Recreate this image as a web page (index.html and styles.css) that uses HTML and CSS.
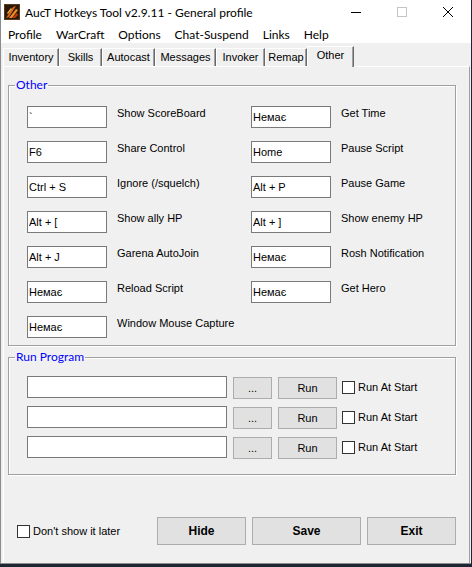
FILE: index.html
```html
<!DOCTYPE html>
<html lang="en">
<head>
  <meta charset="UTF-8">
  <title>AucT Hotkeys Tool v2.9.11 - General profile</title>
  <link rel="stylesheet" href="styles.css">
</head>
<body>
  <div class="window">
    <div class="titlebar">
      <svg class="app-icon" width="16" height="16" viewBox="0 0 16 16">
        <rect width="16" height="16" fill="#2a1809"/>
        <rect x="0.5" y="0.5" width="15" height="15" fill="none" stroke="#5a3a1c"/>
        <path d="M2 14 L9 3 L12 2 L5 13 Z" fill="#d9661a"/>
        <path d="M5 14 L12 5 L14 6 L8 14 Z" fill="#f08a24"/>
        <path d="M8 14 L13 9 L14 11 L11 14 Z" fill="#b83a12"/>
        <path d="M3 9 L7 4 L8 5 L4 10 Z" fill="#f6b24a"/>
      </svg>
      <span class="title">AucT Hotkeys Tool v2.9.11 - General profile</span>
      <div class="caption">
        <span class="cap-btn">
          <svg width="10" height="10" viewBox="0 0 10 10"><path d="M0 5.5 H10" stroke="#000" stroke-width="1"/></svg>
        </span>
        <span class="cap-btn">
          <svg width="10" height="10" viewBox="0 0 10 10"><rect x="0.5" y="0.5" width="9" height="9" fill="none" stroke="#c4c4c4"/></svg>
        </span>
        <span class="cap-btn">
          <svg width="10" height="10" viewBox="0 0 10 10"><path d="M0 0 L10 10 M10 0 L0 10" stroke="#000" stroke-width="1"/></svg>
        </span>
      </div>
    </div>

    <ul class="menubar">
      <li>Profile</li>
      <li>WarCraft</li>
      <li>Options</li>
      <li>Chat-Suspend</li>
      <li>Links</li>
      <li>Help</li>
    </ul>

    <div class="tabs">
      <div class="tab tab-inventory">Inventory</div>
      <div class="tab tab-skills">Skills</div>
      <div class="tab tab-autocast">Autocast</div>
      <div class="tab tab-messages">Messages</div>
      <div class="tab tab-invoker">Invoker</div>
      <div class="tab tab-remap">Remap</div>
      <div class="tab tab-other active">Other</div>
    </div>

    <div class="tabpage">
      <fieldset class="group group-other">
        <legend>Other</legend>
        <div class="hotkeys">
          <div class="hotkey"><div class="textbox">`</div><span class="hk-label">Show ScoreBoard</span></div>
          <div class="hotkey"><div class="textbox">F6</div><span class="hk-label">Share Control</span></div>
          <div class="hotkey"><div class="textbox">Ctrl + S</div><span class="hk-label">Ignore (/squelch)</span></div>
          <div class="hotkey"><div class="textbox">Alt + [</div><span class="hk-label">Show ally HP</span></div>
          <div class="hotkey"><div class="textbox">Alt + J</div><span class="hk-label">Garena AutoJoin</span></div>
          <div class="hotkey"><div class="textbox">Немає</div><span class="hk-label">Reload Script</span></div>
          <div class="hotkey"><div class="textbox">Немає</div><span class="hk-label">Window Mouse Capture</span></div>
          <div class="hotkey"><div class="textbox">Немає</div><span class="hk-label">Get Time</span></div>
          <div class="hotkey"><div class="textbox">Home</div><span class="hk-label">Pause Script</span></div>
          <div class="hotkey"><div class="textbox">Alt + P</div><span class="hk-label">Pause Game</span></div>
          <div class="hotkey"><div class="textbox">Alt + ]</div><span class="hk-label">Show enemy HP</span></div>
          <div class="hotkey"><div class="textbox">Немає</div><span class="hk-label">Rosh Notification</span></div>
          <div class="hotkey"><div class="textbox">Немає</div><span class="hk-label">Get Hero</span></div>
        </div>
      </fieldset>

      <fieldset class="group group-run">
        <legend>Run Program</legend>
        <div class="run-row">
          <div class="textbox wide"></div>
          <span class="btn btn-browse">...</span>
          <span class="btn btn-run">Run</span>
          <span class="check"></span>
          <span class="check-label">Run At Start</span>
        </div>
        <div class="run-row">
          <div class="textbox wide"></div>
          <span class="btn btn-browse">...</span>
          <span class="btn btn-run">Run</span>
          <span class="check"></span>
          <span class="check-label">Run At Start</span>
        </div>
        <div class="run-row">
          <div class="textbox wide"></div>
          <span class="btn btn-browse">...</span>
          <span class="btn btn-run">Run</span>
          <span class="check"></span>
          <span class="check-label">Run At Start</span>
        </div>
      </fieldset>

      <div class="footer">
        <span class="check"></span>
        <span class="check-label">Don't show it later</span>
        <span class="btn btn-big btn-hide">Hide</span>
        <span class="btn btn-big btn-save">Save</span>
        <span class="btn btn-big btn-exit">Exit</span>
      </div>
    </div>
  </div>
</body>
</html>
```

FILE: styles.css
```css
*{
  margin: 0;
  padding: 0;
  box-sizing: border-box;
}
ul,li{
  list-style: none;
}
body{
  background: #1d2734;
  width: 472px;
  height: 567px;
  overflow: hidden;
}
.window{
  display: flex;
  flex-direction: column;
  width: 471px;
  height: 564px;
  background: #f0f0f0;
  border-left: 1px solid #8c8c8c;
  border-bottom: 1px solid #8c8c8c;
}

/* title bar */
.titlebar{
  display: flex;
  align-items: center;
  height: 24px;
  background: #fff;
  font-family: Lato, "Noto Sans", sans-serif;
  font-size: 12px;
  color: #000;
}
.app-icon{
  margin-left: 3px;
  flex-shrink: 0;
}
.title{
  margin-left: 5px;
  padding-top: 1px;
}
.caption{
  display: flex;
  margin-left: auto;
  height: 100%;
}
.cap-btn{
  display: flex;
  align-items: center;
  justify-content: center;
  width: 46px;
  height: 100%;
}

/* menu */
.menubar{
  display: flex;
  height: 19px;
  padding: 2px 0 0 0;
  background: #fff;
  font-family: Lato, "Noto Sans", sans-serif;
  font-size: 12px;
  line-height: 17px;
}
.menubar li{
  padding: 0 7px;
}
.menubar li:first-child{
  padding-left: 7px;
}

/* tabs */
.tabs{
  display: flex;
  align-items: flex-end;
  height: 23px;
  padding-left: 2px;
  font-family: "Liberation Sans", Arial, sans-serif;
  font-size: 11px;
}
.tab{
  height: 18px;
  line-height: 17px;
  text-align: center;
  border-top: 1px solid #fff;
  border-left: 1px solid #fff;
  border-right: 1px solid #696969;
  box-shadow: inset -1px 0 0 #a0a0a0;
}
.tab-inventory{ width: 56px; }
.tab-skills{ width: 43px; }
.tab-autocast{ width: 53px; }
.tab-messages{ width: 61px; }
.tab-invoker{ width: 49px; }
.tab-remap{ width: 42px; }
.tab.active{
  position: relative;
  z-index: 1;
  width: 47px;
  height: 21px;
  margin-bottom: -1px;
  line-height: 16px;
  background: #f0f0f0;
}

/* tab page */
.tabpage{
  flex: 1;
  display: flex;
  flex-direction: column;
  margin-left: 2px;
  margin-right: 1px;
  padding: 0 13px 0 4px;
  border-top: 1px solid #fff;
  border-left: 1px solid #fff;
  border-right: 1px solid #a0a0a0;
  font-family: "Liberation Sans", Arial, sans-serif;
  font-size: 11px;
}
.group{
  border: 1px solid #a0a0a0;
  box-shadow: 1px 1px 0 #fff, inset 1px 1px 0 #fff;
  padding: 0 0 0 18px;
}
.group legend{
  margin-left: -12px;
  padding: 0 1px;
  height: 14px;
  line-height: 14px;
  font-family: Lato, "Noto Sans", sans-serif;
  font-size: 12px;
  color: #0000ff;
}
.group-other{
  margin-top: 11px;
  padding-top: 14px;
  padding-bottom: 7px;
}
.group-run{
  margin-top: 4px;
  padding-top: 12px;
  padding-bottom: 16px;
}

.hotkeys{
  display: grid;
  grid-template-columns: 224px 200px;
  grid-template-rows: repeat(7, 22px);
  grid-auto-flow: column;
  row-gap: 13px;
}
.hotkey{
  display: flex;
  align-items: flex-start;
}
.textbox{
  width: 80px;
  height: 22px;
  padding-left: 1px;
  line-height: 20px;
  background: #fff;
  border: 1px solid #7a7a7a;
  white-space: nowrap;
}
.textbox.wide{
  width: 200px;
}
.hk-label{
  margin: 1px 0 0 10px;
  line-height: 13px;
  white-space: nowrap;
}

.run-row{
  display: flex;
  align-items: center;
  height: 22px;
}
.run-row + .run-row{
  margin-top: 8px;
}
.btn{
  display: flex;
  align-items: center;
  justify-content: center;
  height: 22px;
  background: #e1e1e1;
  border: 1px solid #adadad;
}
.run-row .btn{
  align-self: flex-start;
  margin-top: 1px;
}
.btn-browse{
  width: 39px;
  margin-left: 6px;
}
.btn-run{
  width: 59px;
  margin-left: 6px;
}
.check{
  width: 13px;
  height: 13px;
  background: #fff;
  border: 1px solid #333;
  flex-shrink: 0;
}
.run-row .check{
  margin-left: 5px;
}
.check-label{
  margin-left: 3px;
  white-space: nowrap;
}

.footer{
  display: flex;
  align-items: center;
  margin-top: 42px;
  padding-left: 9px;
}
.btn-big{
  height: 28px;
  font-size: 12px;
  font-weight: bold;
}
.btn-hide{
  width: 89px;
  margin-left: auto;
}
.btn-save{
  width: 109px;
  margin-left: 6px;
}
.btn-exit{
  width: 89px;
  margin-left: 6px;
}
```
